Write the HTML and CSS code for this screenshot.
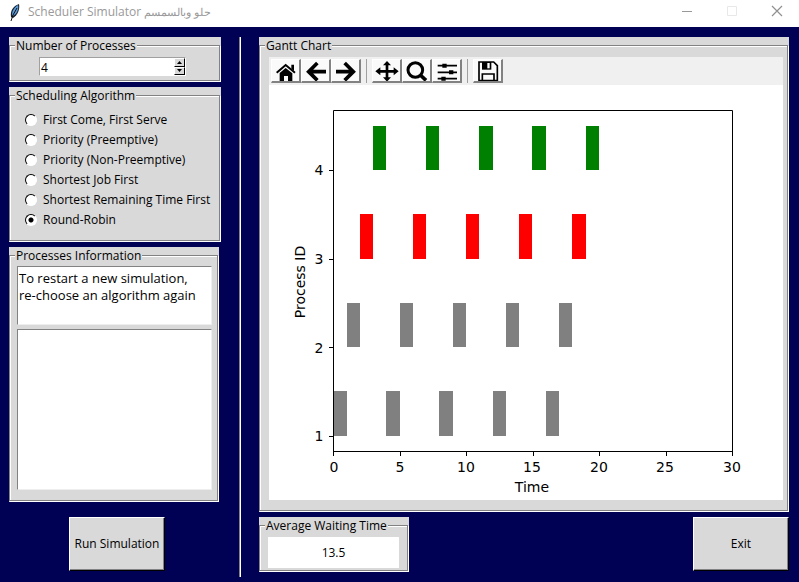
FILE: index.html
```html
<!DOCTYPE html>
<html lang="en">
<head>
<meta charset="utf-8">
<title>Scheduler Simulator</title>
<link rel="stylesheet" href="styles.css">
</head>
<body>
<header class="titlebar">
  <svg class="feather" width="16" height="18" viewBox="0 0 16 18" aria-hidden="true">
    <path d="M4 14C3 8 6 3 12 1C13 6 11 12 6 15Z" fill="#17202e"/>
    <path d="M5 12C5 7 8 4 11 2C12 6 10 11 6 13Z" fill="#5b9bd8"/>
    <path d="M4 18L6 12L10 5" fill="none" stroke="#111"/>
  </svg>
  <h1 class="title">Scheduler Simulator <bdi>حلو وبالسمسم</bdi></h1>
  <div class="window-buttons">
    <button type="button" aria-label="Minimize"><svg width="12" height="12" viewBox="0 0 12 12"><path d="M1 6.500H11" stroke="#999"/></svg></button>
    <button type="button" aria-label="Maximize" disabled><svg width="12" height="12" viewBox="0 0 12 12"><path d="M1.500 1.500H10.500V10.500H1.500Z" fill="none" stroke="#e8e8e8"/></svg></button>
    <button type="button" aria-label="Close"><svg width="12" height="12" viewBox="0 0 12 12"><path d="M1 1L11 11M11 1L1 11" stroke="#909090" stroke-width="1.200"/></svg></button>
  </div>
</header>

<main class="app">
  <div class="sidebar">
    <div class="group">
      <fieldset class="etched">
        <legend>Number of Processes</legend>
        <div class="spinbox">
          <input type="text" inputmode="numeric" value="4" aria-label="Number of Processes">
          <div class="spin-buttons">
            <button type="button" aria-label="Increase"><svg width="5" height="3" viewBox="0 0 5 3"><path d="M0 3L2.500 0L5 3Z"/></svg></button>
            <button type="button" aria-label="Decrease"><svg width="5" height="3" viewBox="0 0 5 3"><path d="M0 0L2.500 3L5 0Z"/></svg></button>
          </div>
        </div>
      </fieldset>
    </div>

    <div class="group">
      <fieldset class="etched">
        <legend>Scheduling Algorithm</legend>
        <div class="choices">
          <label><input type="radio" name="algorithm">First Come, First Serve</label>
          <label><input type="radio" name="algorithm">Priority (Preemptive)</label>
          <label><input type="radio" name="algorithm">Priority (Non-Preemptive)</label>
          <label><input type="radio" name="algorithm">Shortest Job First</label>
          <label><input type="radio" name="algorithm">Shortest Remaining Time First</label>
          <label><input type="radio" name="algorithm" checked>Round-Robin</label>
        </div>
      </fieldset>
    </div>

    <div class="group group-info">
      <fieldset class="etched">
        <legend>Processes Information</legend>
        <div class="info">
          <textarea class="message" aria-label="Message" readonly>To restart a new simulation,
re-choose an algorithm again</textarea>
          <textarea class="log" aria-label="Process details" readonly></textarea>
        </div>
      </fieldset>
    </div>

    <button type="button" class="push run">Run Simulation</button>
  </div>

  <div class="divider"></div>

  <div class="content">
    <div class="group group-chart">
      <fieldset class="etched">
        <legend>Gantt Chart</legend>
        <div class="figure">
          <div class="toolbar">
            <button type="button" aria-label="Home"><svg viewBox="6 6 78 60"><path d="M17 41L44 18L72 41" fill="none" stroke="#000" stroke-width="6"/><path d="M61 17H69V36L61 29ZM26 42L44 27L64 43V66H51V51H39V66H26Z"/></svg></button>
            <button type="button" aria-label="Back"><svg viewBox="6 6 78 60"><path d="M75 38H27M49 12L23 38L49 64" fill="none" stroke="#000" stroke-width="11"/></svg></button>
            <button type="button" aria-label="Forward"><svg viewBox="6 6 78 60"><path d="M15 38H63M41 12L67 38L41 64" fill="none" stroke="#000" stroke-width="11"/></svg></button>
            <span class="tool-gap"></span>
            <button type="button" aria-label="Pan"><svg viewBox="6 6 78 60"><path d="M20 37H70M45 14V60" stroke="#000" stroke-width="8"/><path d="M10 37L25 25V49ZM80 37L65 25V49ZM45 6L33 19H57ZM45 68L33 55H57Z"/></svg></button>
            <button type="button" aria-label="Zoom"><svg viewBox="6 6 78 60"><circle cx="40" cy="33" r="22" fill="none" stroke="#000" stroke-width="9"/><path d="M55 48L72 64" stroke="#000" stroke-width="11"/></svg></button>
            <button type="button" aria-label="Configure subplots"><svg viewBox="6 6 78 60"><path d="M17 20H75M17 40H75M17 59H75" stroke="#000" stroke-width="5"/><path d="M31 14H44V26H31ZM51 34H64V46H51ZM28 53H41V65H28Z"/></svg></button>
            <span class="tool-gap"></span>
            <button type="button" aria-label="Save"><svg viewBox="6 6 78 60"><path d="M18 9H62L73 20V65H18Z" fill="none" stroke="#000" stroke-width="5"/><path d="M27 9H55V32H27Z"/><path d="M43 12H50V28H43Z" fill="#fff"/><path d="M28 65V45H63V65" fill="none" stroke="#000" stroke-width="5"/></svg></button>
          </div>
          <svg class="chart" viewBox="0 0 514 415" role="img" aria-label="Gantt chart of process ID against time">
            <g class="bars">
              <g fill="#808080">
                <rect x="64" y="306" width="14" height="45"/><rect x="117" y="306" width="14" height="45"/><rect x="170" y="306" width="14" height="45"/><rect x="224" y="306" width="13" height="45"/><rect x="277" y="306" width="13" height="45"/>
                <rect x="78" y="218" width="13" height="44"/><rect x="131" y="218" width="13" height="44"/><rect x="184" y="218" width="13" height="44"/><rect x="237" y="218" width="13" height="44"/><rect x="290" y="218" width="13" height="44"/>
              </g>
              <g fill="#f00">
                <rect x="91" y="129" width="13" height="45"/><rect x="144" y="129" width="13" height="45"/><rect x="197" y="129" width="13" height="45"/><rect x="250" y="129" width="13" height="45"/><rect x="303" y="129" width="14" height="45"/>
              </g>
              <g fill="#008000">
                <rect x="104" y="41" width="13" height="44"/><rect x="157" y="41" width="13" height="44"/><rect x="210" y="41" width="14" height="44"/><rect x="263" y="41" width="14" height="44"/><rect x="317" y="41" width="13" height="44"/>
              </g>
            </g>
            <path class="axes" d="M64.500 25.500H463.500V366.500H64.500ZM64.500 366V371M131.500 366V371M197.500 366V371M264.500 366V371M330.500 366V371M397.500 366V371M463.500 366V371M60 351.500H64M60 262.500H64M60 174.500H64M60 85.500H64"/>
            <g class="ticks">
              <text x="65" y="387">0</text><text x="131" y="387">5</text><text x="197" y="387">10</text><text x="263" y="387">15</text><text x="330" y="387">20</text><text x="396" y="387">25</text><text x="463" y="387">30</text>
              <text x="50" y="356">1</text><text x="50" y="268">2</text><text x="50" y="179">3</text><text x="50" y="90">4</text>
              <text x="263" y="407">Time</text>
              <text transform="translate(36 197) rotate(-90)">Process ID</text>
            </g>
          </svg>
        </div>
      </fieldset>
    </div>

    <div class="bottom-row">
      <div class="group group-average">
        <fieldset class="etched">
          <legend>Average Waiting Time</legend>
          <output class="average">13.5</output>
        </fieldset>
      </div>
      <button type="button" class="push">Exit</button>
    </div>
  </div>
</main>
</body>
</html>
```
FILE: styles.css
```css
* {
  box-sizing: border-box;
}

body {
  margin: 0;
  min-height: 100vh;
  display: flex;
  flex-direction: column;
  background: #000055;
  color: #000;
  font: 12px/16px "Open Sans", "Noto Sans", sans-serif;
}

button,
input,
textarea {
  font: inherit;
  color: inherit;
  margin: 0;
}

/* Title bar */
.titlebar {
  display: flex;
  align-items: center;
  height: 27px;
  padding-left: 7px;
  background: #fff;
}

.titlebar .feather {
  margin-bottom: 4px;
}

.title {
  flex: 1;
  margin: 0 0 3px 5px;
  font-size: 12px;
  font-weight: 400;
  color: #999;
}

.title bdi {
  font-size: 11px;
}

.window-buttons {
  display: flex;
  align-self: stretch;
}

.window-buttons button {
  display: flex;
  justify-content: center;
  width: 45px;
  padding: 5px 0 0;
  border: 0;
  background: none;
}

/* Main layout */
.app {
  flex: 1;
  display: grid;
  grid-template-columns: 212px 2px 1fr;
  gap: 18px;
  padding: 10px 10px 5px 9px;
}

.sidebar,
.content {
  display: flex;
  flex-direction: column;
  gap: 5px;
  padding-bottom: 5px;
}

.divider {
  border-left: 1px solid #828282;
  border-right: 1px solid #fff;
}

/* Etched group frames */
.group {
  display: flex;
  padding: 8px 1px 1px 0;
  background: #d9d9d9;
}

.etched {
  flex: 1;
  display: flex;
  flex-direction: column;
  min-width: 0;
  margin: 0;
  padding: 0;
  border: 1px solid #828282;
  box-shadow: inset 1px 1px #fff, 1px 1px #fff;
}

.etched legend {
  float: left;
  align-self: flex-start;
  margin: -8px 0 0 5px;
  padding: 0 1px;
  background: #d9d9d9;
}

/* Spin box */
.spinbox {
  display: flex;
  width: 147px;
  height: 19px;
  margin: 3px 0 4px 29px;
  border: 1px solid #a0a0a0;
  border-right-color: #fff;
  border-bottom-color: #fff;
  background: #fff;
}

.spinbox input {
  flex: 1;
  min-width: 0;
  padding: 2px 1px 0;
  border: 0;
  background: none;
}

.spin-buttons {
  display: flex;
  flex-direction: column;
  width: 11px;
}

.spin-buttons button {
  flex: 1;
  display: flex;
  align-items: center;
  justify-content: center;
  padding: 0;
  border: 1px solid #fff;
  border-right-color: #000;
  border-bottom-color: #000;
  background: #d9d9d9;
}

/* Radio list */
.choices {
  display: flex;
  flex-direction: column;
  padding: 6px 0 10px 15px;
}

.choices label {
  display: flex;
  align-items: center;
  gap: 6px;
  height: 20px;
}

.choices input {
  appearance: none;
  width: 12px;
  height: 12px;
  border: 1px solid #fff;
  border-top-color: #000;
  border-left-color: #000;
  border-radius: 50%;
  background: #fff;
}

.choices input:checked {
  background: radial-gradient(circle, #000 2px, #fff 3px);
}

/* Information boxes */
.group-info {
  flex: 1;
  margin-right: 2px;
}

.info {
  flex: 1;
  display: flex;
  flex-direction: column;
  gap: 4px;
  padding: 2px 5px 10px 7px;
}

.info textarea {
  width: 100%;
  padding: 3px 1px;
  border: 1px solid #828282;
  border-right-color: #eee;
  border-bottom-color: #eee;
  background: #fff;
  resize: none;
  overflow: hidden;
  font: 13px/17px "Open Sans", "Noto Sans", sans-serif;
}

.message {
  height: 59px;
}

.log {
  flex: 1;
}

/* Push buttons */
.push {
  width: 96px;
  height: 54px;
  padding: 0;
  border: 1px solid #fff;
  border-right-color: #000;
  border-bottom-color: #000;
  box-shadow: inset -1px -1px #828282;
  background: #d9d9d9;
}

.run {
  align-self: center;
  margin: 10px 0 1px 4px;
}

/* Chart */
.group-chart {
  flex: 1;
}

.figure {
  flex: 1;
  display: flex;
  flex-direction: column;
  margin: 3px 4px 10px 9px;
  background: #fff;
}

.toolbar {
  display: flex;
  align-items: center;
  height: 28px;
  padding: 0 2px;
  background: #f0f0f0;
}

.toolbar button {
  width: 30px;
  height: 24px;
  padding: 0;
  border: 1px solid #fff;
  border-right: 2px solid #828282;
  border-bottom: 2px solid #828282;
  background: #fafafa;
}

.toolbar svg {
  display: block;
  width: 26px;
  height: 20px;
  margin: 1px 0 0 1px;
}

.tool-gap {
  width: 1px;
  height: 24px;
  margin: 0 5px;
  background: #a0a0a0;
}

.chart {
  flex: 1;
  width: 100%;
  min-height: 0;
}

.bars {
  shape-rendering: crispEdges;
}

.axes {
  fill: none;
  stroke: #000;
}

.ticks {
  font: 14px "DejaVu Sans", sans-serif;
  text-anchor: middle;
}

/* Bottom row */
.bottom-row {
  display: flex;
  justify-content: space-between;
  align-items: flex-start;
}

.group-average {
  width: 150px;
  height: 55px;
}

.average {
  display: block;
  height: 31px;
  margin: 3px 8px 0 8px;
  padding-top: 8px;
  background: #fff;
  text-align: center;
}
```
